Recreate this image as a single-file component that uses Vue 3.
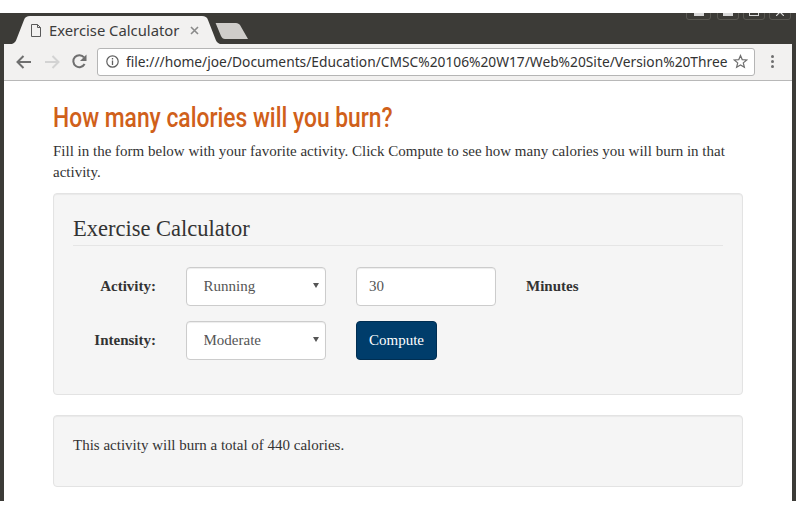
<template>
  <div class="desktop">
    <div class="window">
      <div class="tabstrip">
        <svg class="tab-shape" width="240" height="31" viewBox="0 0 240 31">
          <path d="M9 31 C12 30 13 28 14 25 L21 7 C22 4 24 3 27 3 H199 C202 3 204 4 205 7 L212 25 C213 28 214 30 217 31 Z" fill="#f2f1f0" />
          <path d="M213 11 C212 10 213 10 214 10 H233 C235 10 236 11 237 12 L245 26 H222 C220 26 219 25 218 23 Z" fill="#cfcdca" />
        </svg>
        <svg class="page-icon" width="12" height="13" viewBox="0 0 12 13">
          <path d="M1.5 .5 H7.5 L10.5 3.5 V12.5 H1.5 Z M7.5 .5 V3.5 H10.5" fill="none" stroke="#5a5a5a" />
        </svg>
        <span class="tab-title">Exercise Calculator</span>
        <svg class="tab-close" width="9" height="9" viewBox="0 0 9 9">
          <path d="M1 1 L8 8 M8 1 L1 8" stroke="#8a8a8a" stroke-width="1.6" />
        </svg>
        <div class="win-btns">
          <span class="win-btn first"><i class="bar"></i></span>
          <span class="win-btn"><i class="bar"></i></span>
          <span class="win-btn"><i class="box"></i></span>
          <span class="win-btn">
            <svg width="8" height="8" viewBox="0 0 8 8"><path d="M0 0 L8 8 M8 0 L0 8" stroke="#d8d8d8" stroke-width="1.2" /></svg>
          </span>
        </div>
      </div>

      <div class="toolbar">
        <svg width="16" height="14" viewBox="0 0 16 14" class="nav-icon">
          <path d="M15 7 H2 M7.5 1 L1.5 7 L7.5 13" fill="none" stroke="#6f6f6f" stroke-width="2" />
        </svg>
        <svg width="16" height="14" viewBox="0 0 16 14" class="nav-icon">
          <path d="M1 7 H14 M8.5 1 L14.5 7 L8.5 13" fill="none" stroke="#d3d3d3" stroke-width="2" />
        </svg>
        <svg width="15" height="15" viewBox="0 0 15 15" class="nav-icon">
          <path d="M12.6 10 A6 6 0 1 1 12 3.4" fill="none" stroke="#6f6f6f" stroke-width="2" />
          <path d="M14.5 .5 V7 H8 Z" fill="#6f6f6f" />
        </svg>
        <div class="omnibox">
          <svg width="13" height="13" viewBox="0 0 13 13">
            <circle cx="6.5" cy="6.5" r="5.7" fill="none" stroke="#5f5f5f" stroke-width="1.2" />
            <path d="M6.5 5.6 V10 M6.5 3 V4.4" stroke="#5f5f5f" stroke-width="1.3" />
          </svg>
          <span class="url">file:///home/joe/Documents/Education/CMSC%20106%20W17/Web%20Site/Version%20Three</span>
          <svg width="15" height="15" viewBox="0 0 15 15" class="star">
            <path d="M7.5 1.5 L9.2 5.6 L13.7 6 L10.3 8.9 L11.4 13.3 L7.5 11 L3.6 13.3 L4.7 8.9 L1.3 6 L5.8 5.6 Z" fill="none" stroke="#6f6f6f" stroke-width="1.2" />
          </svg>
        </div>
        <div class="menu-dots"><i></i><i></i><i></i></div>
      </div>

      <main class="page">
        <h1 class="heading">How many calories will you burn?</h1>
        <p class="intro">Fill in the form below with your favorite activity. Click Compute to see how many calories you will burn in that activity.</p>

        <form class="well form" @submit.prevent>
          <legend class="legend">Exercise Calculator</legend>
          <div class="form-grid">
            <label class="lbl">Activity:</label>
            <div class="select-wrap"><select class="ctl"><option>Running</option></select></div>
            <input class="ctl txt" value="30" />
            <label class="lbl minutes">Minutes</label>

            <label class="lbl">Intensity:</label>
            <div class="select-wrap"><select class="ctl"><option>Moderate</option></select></div>
            <button class="btn" type="button">Compute</button>
          </div>
        </form>

        <div class="well result">This activity will burn a total of 440 calories.</div>
      </main>
    </div>
  </div>
</template>

<script setup>
</script>

<style>
html, body {
  margin: 0;
  background: #fff;
  overflow: hidden;
}
</style>

<style scoped>
.desktop {
  width: 796px;
  height: 514px;
  padding-top: 13px;
  box-sizing: border-box;
  background: #fff;
}

.window {
  height: 488px;
  display: flex;
  flex-direction: column;
  background: #3c3b37;
  overflow: hidden;
}

.tabstrip {
  position: relative;
  height: 31px;
  flex: none;
  display: flex;
  align-items: center;
  padding: 3px 0 0 30px;
  box-sizing: border-box;
}

.tab-shape {
  position: absolute;
  left: 3px;
  top: 0;
  overflow: visible;
}

.page-icon, .tab-close, .tab-title {
  position: relative;
}

.tab-title {
  margin-left: 7px;
  font: 14.8px "Noto Sans", sans-serif;
  color: #3c3c3c;
  width: 130px;
  white-space: nowrap;
}

.tab-close {
  margin-left: 11px;
}

.win-btns {
  position: absolute;
  left: 686px;
  top: -12px;
  display: flex;
  gap: 4px;
}

.win-btn {
  width: 22px;
  height: 19px;
  border: 1px solid #5a5953;
  border-radius: 3px;
  box-sizing: border-box;
  display: flex;
  justify-content: center;
  align-items: flex-start;
  padding-top: 11px;
  overflow: hidden;
}

.win-btn.first {
  width: 25px;
  margin-right: 2px;
}

.win-btn svg {
  margin-top: -5px;
}

.win-btn i {
  display: block;
  width: 10px;
  height: 3px;
  background: #d8d8d8;
}

.win-btn .box {
  box-sizing: border-box;
  background: none;
  border: 1px solid #d8d8d8;
  border-top: 0;
}

.toolbar {
  height: 37px;
  flex: none;
  margin: 0 4px;
  padding: 0 0 1px 0;
  box-sizing: border-box;
  background: #f2f1f0;
  border-bottom: 1px solid #b8b8b8;
  display: flex;
  align-items: center;
}

.nav-icon { margin-left: 12px; }

.omnibox {
  margin-left: 10px;
  width: 658px;
  height: 28px;
  box-sizing: border-box;
  background: #fff;
  border: 1px solid #b5b5b5;
  border-radius: 3px;
  display: flex;
  align-items: center;
  padding: 0 6px 0 8px;
}

.url {
  margin-left: 7px;
  flex: 1;
  overflow: hidden;
  white-space: nowrap;
  font: 13.77px "Noto Sans", sans-serif;
  color: #333;
}

.star {
  margin-left: 5px;
  flex: none;
}

.menu-dots {
  margin-left: 16px;
  display: flex;
  flex-direction: column;
  gap: 2px;
}

.menu-dots i {
  display: block;
  width: 3px;
  height: 3px;
  border-radius: 50%;
  background: #6f6f6f;
}

.page {
  flex: 1;
  margin: 0 4px;
  background: #fff;
  padding: 19px 49px 0;
  font-family: "Liberation Serif", serif;
  font-size: 15px;
  line-height: 21.43px;
  color: #333;
}

.heading {
  margin: 0 0 5px;
  font-family: Roboto, sans-serif;
  font-weight: 500;
  font-size: 27px;
  line-height: 36px;
  color: #d0601a;
  transform: scaleX(.845);
  transform-origin: left center;
  white-space: nowrap;
}

.intro {
  margin: 0 0 9px;
}

.well {
  background: #f5f5f5;
  border: 1px solid #e3e3e3;
  border-radius: 4px;
  box-shadow: inset 0 1px 1px rgba(0, 0, 0, .05);
  padding: 19px;
  box-sizing: border-box;
}

.form {
  height: 202px;
  margin-bottom: 20px;
}

.legend {
  display: block;
  width: 100%;
  padding: 0;
  margin: 0 0 21px;
  font-size: 22.5px;
  line-height: 32px;
  color: #333;
  border-bottom: 1px solid #e5e5e5;
  height: 33px;
  box-sizing: border-box;
}

.form-grid {
  display: grid;
  grid-template-columns: 83px 140px 140px auto;
  column-gap: 30px;
  row-gap: 15px;
  align-items: center;
}

.lbl {
  font-weight: 700;
  text-align: right;
}

.lbl.minutes {
  text-align: left;
}

.select-wrap {
  position: relative;
  height: 39px;
}

.select-wrap::after {
  content: "";
  position: absolute;
  right: 7px;
  top: 16px;
  border-style: solid;
  border-width: 5px 3px 0;
  border-color: #555 transparent transparent;
  pointer-events: none;
}

.ctl {
  display: block;
  width: 140px;
  height: 39px;
  box-sizing: border-box;
  background: #fff;
  border: 1px solid #ccc;
  border-radius: 4px;
  padding: 6px 12px;
  font: inherit;
  color: #555;
  box-shadow: inset 0 1px 1px rgba(0, 0, 0, .075);
}

select.ctl {
  appearance: none;
  padding-left: 16.5px;
}

.btn {
  justify-self: start;
  height: 39px;
  padding: 0 12px;
  font: inherit;
  color: #fff;
  background: #003d6b;
  border: 1px solid #002e52;
  border-radius: 4px;
}

.result {
  height: 72px;
}
</style>
